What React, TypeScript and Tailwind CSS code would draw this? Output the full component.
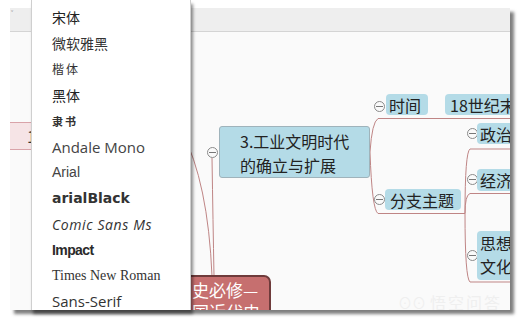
import React from "react";

const cjk = { fontFamily: '"Noto Sans CJK SC", "Noto Sans", sans-serif' };

function Circle({ x, y }: { x: number; y: number }) {
  return (
    <div
      className="absolute w-[11px] h-[11px] rounded-full border border-[#8a8a8a] bg-[#fafafa] flex items-center justify-center"
      style={{ left: x - 5.5, top: y - 5.5 }}
    >
      <div className="w-[7px] h-px bg-[#777]" />
    </div>
  );
}

export default function App() {
  const items: { label: string; cls: string; style?: React.CSSProperties }[] = [
    { label: "宋体", cls: "text-[14px] text-[#222]", style: cjk },
    { label: "微软雅黑", cls: "text-[14px] text-[#333]", style: cjk },
    { label: "楷体", cls: "text-[12px] text-[#333] tracking-[2px]", style: cjk },
    { label: "黑体", cls: "text-[14px] text-[#222]", style: cjk },
    { label: "隶书", cls: "text-[11px] font-bold text-[#333] tracking-[2px]", style: cjk },
    { label: "Andale Mono", cls: "text-[15px] text-[#444]", style: { fontFamily: '"Open Sans", sans-serif' } },
    { label: "Arial", cls: "text-[14px] text-[#444]", style: { fontFamily: '"Liberation Sans", sans-serif' } },
    { label: "arialBlack", cls: "text-[14px] font-bold text-[#333]", style: { fontFamily: '"DejaVu Sans", sans-serif' } },
    { label: "Comic Sans Ms", cls: "text-[14px] italic text-[#333] tracking-[0.6px]", style: { fontFamily: '"Open Sans", sans-serif' } },
    { label: "Impact", cls: "text-[14px] font-black text-[#2a2a2a] tracking-[-0.6px]", style: { fontFamily: '"Liberation Sans", sans-serif' } },
    { label: "Times New Roman", cls: "text-[14px] text-[#333]", style: { fontFamily: '"Liberation Serif", serif' } },
    { label: "Sans-Serif", cls: "text-[15px] text-[#333]", style: { fontFamily: '"Open Sans", sans-serif' } },
  ];

  return (
    <div className="relative w-[521px] h-[321px] bg-white overflow-hidden">
      {/* window */}
      <div className="absolute left-[10px] top-[8px] w-[500px] h-[302px] flex flex-col shadow-[4px_4px_3px_rgba(0,0,0,0.5)]">
        <div className="h-[24px] bg-[#eeeeee] border-b border-[#d4d4d4] relative">
          <span className="absolute left-[1px] top-[0px] text-[8px] text-[#888]">˅</span>
        </div>
        <div className="relative flex-1 bg-[#fafafa] overflow-hidden" style={cjk}>
          <svg className="absolute left-0 top-0" width="500" height="278">
            <g fill="none" stroke="#bf8585" strokeWidth="1">
              <path d="M172 100 Q198 150 202 244" />
              <path d="M202 126 Q203 190 204 244" />
              <path d="M360 120 Q362 90 368 86.5 L500 86.5" />
              <path d="M360 120 Q362 178 368 181.5 L455 181.5" />
              <path d="M455 181.5 Q455 120 460 117 L500 117" />
              <path d="M455 181.5 Q455 163 460 161.5 L500 161.5" />
              <path d="M455 181.5 Q455 246 460 250 L500 250" />
            </g>
          </svg>

          {/* pink node "1" */}
          <div className="absolute left-[-10px] top-[90px] w-[50px] h-[28px] bg-[#f6e4e6] border-y border-[#d9a3a9] flex items-center justify-end pr-[14px] text-[16px] text-[#333]">
            1
          </div>

          {/* central node */}
          <Circle x={202} y={120} />
          <div className="absolute left-[209px] top-[94px] w-[151px] h-[52px] rounded-[3px] border border-[#9fb3bb] bg-[#b4dbe7] pl-[20px] pt-[2px] text-[16px] leading-[24px] text-[#222]">
            <div>3.工业文明时代</div>
            <div>的确立与扩展</div>
          </div>

          {/* 时间 */}
          <Circle x={369} y={74} />
          <div className="absolute left-[376px] top-[62px] w-[42px] h-[21px] rounded-[4px] bg-[#b4dbe7] flex items-center pl-[3px] text-[16px] text-[#222]">
            时间
          </div>
          <div className="absolute left-[435px] top-[62px] w-[80px] h-[21px] rounded-[4px] bg-[#b4dbe7] flex items-center pl-[5px] text-[16px] text-[#222] whitespace-nowrap">
            18世纪末
          </div>

          {/* 分支主题 */}
          <Circle x={369} y={167} />
          <div className="absolute left-[375px] top-[157px] w-[76px] h-[21px] rounded-[4px] bg-[#b4dbe7] flex items-center pl-[5px] text-[16px] text-[#222]">
            分支主题
          </div>

          {/* 政治 */}
          <Circle x={462} y={101} />
          <div className="absolute left-[467px] top-[91px] w-[50px] h-[21px] rounded-[4px] bg-[#b4dbe7] flex items-center pl-[3px] text-[16px] text-[#222] whitespace-nowrap">
            政治
          </div>

          {/* 经济 */}
          <Circle x={462} y={147} />
          <div className="absolute left-[467px] top-[137px] w-[50px] h-[22px] rounded-[4px] bg-[#b4dbe7] flex items-center pl-[3px] text-[16px] text-[#222] whitespace-nowrap">
            经济
          </div>

          {/* 思想文化 */}
          <Circle x={462} y={223} />
          <div className="absolute left-[467px] top-[199px] w-[50px] h-[49px] rounded-[4px] bg-[#b4dbe7] pl-[3px] pt-[1px] text-[16px] leading-[23px] text-[#222]">
            <div>思想</div>
            <div>文化</div>
          </div>

          {/* red root node */}
          <div className="absolute left-[150px] top-[243px] w-[111px] h-[60px] rounded-tr-[7px] border-2 border-[#6e3b3b] bg-[#c66f6f] pl-[30px] pt-[2px] text-[17px] leading-[22px] text-white whitespace-nowrap">
            <div>史必修—</div>
            <div>国近代史</div>
          </div>

          {/* watermark */}
          <div className="absolute left-[388px] top-[258px] flex items-center gap-[4px] text-[16px] text-[#efefef]">
            <span className="text-[14px]">⊙⊙</span>
            <span className="tracking-[2px]">悟空问答</span>
          </div>
        </div>
      </div>

      {/* font dropdown menu */}
      <div className="absolute left-[31px] top-0 w-[160px] h-[310px] bg-white border-x border-[#cfcfcf] overflow-hidden shadow-[2px_4px_3px_rgba(0,0,0,0.45)] pt-[5px]">
        {items.map((it) => (
          <div key={it.label} className="h-[25.8px] flex items-center pl-[20px] whitespace-nowrap">
            <span className={it.cls} style={it.style}>
              {it.label}
            </span>
          </div>
        ))}
      </div>
    </div>
  );
}
